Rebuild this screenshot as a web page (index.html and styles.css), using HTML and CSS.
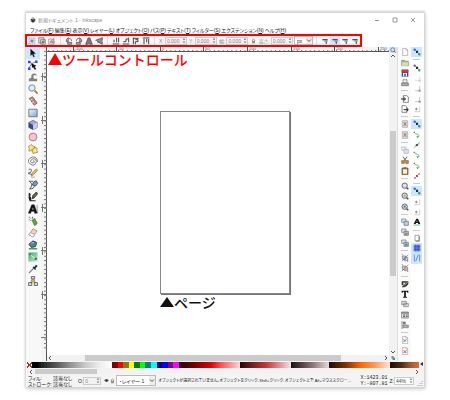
FILE: index.html
```html
<!DOCTYPE html>
<html lang="ja">
<head>
<meta charset="utf-8">
<title>新規ドキュメント 1 - Inkscape</title>
<link rel="stylesheet" href="styles.css">
</head>
<body>
<svg class="defs" aria-hidden="true">
  <defs>
    <linearGradient id="g-blue" x2="1" y2="1"><stop stop-color="#eef6fd"/><stop offset="1" stop-color="#7fa6cc"/></linearGradient>
    <linearGradient id="g-grass" x2="1" y2="1"><stop stop-color="#3fa765"/><stop offset="1" stop-color="#c6efcf"/></linearGradient>
    <symbol id="snap" viewBox="0 0 12 12"><path d="M2.5 2.5 9.5 9.5" stroke="#5c7a94"/><path d="M1 1h3v3H1z" fill="#2a55d8"/><path d="M4.5 4h3.200v3.500H4.500z" fill="#1d2b52"/><path d="M8 8h3v3H8z" fill="#2c8a50"/></symbol>
    <symbol id="corner" viewBox="0 0 12 12"><path d="M3 10h7V3" fill="none" stroke="#a9b0b5"/><path d="M8.500 8.500h3v3h-3z" fill="#8c9599"/></symbol>
    <symbol id="cornerdot" viewBox="0 0 12 12"><path d="M2 10h8V2" fill="none" stroke="#b7bbbe"/><path d="M5 4v4M3 6h4" stroke="#666"/></symbol>
    <symbol id="curve" viewBox="0 0 12 12"><path d="M2 2c1 4 7 1 7 6" fill="none" stroke="#55a868" stroke-width="1.300"/><path d="M5 8h4l-2 3z" fill="#4c8e5c"/><path d="M1 1h2v2H1z" fill="#777"/></symbol>
    <symbol id="mag" viewBox="0 0 12 12"><circle cx="5.500" cy="5.500" r="4" fill="#d3e2ee" stroke="#59636b" stroke-width="1.400"/><path d="m8.500 8.500 2.500 2.500" stroke="#444" stroke-width="2"/></symbol>
    <symbol id="clone" viewBox="0 0 12 12"><path d="M1 1.500h6.500v5H1z" fill="#dbe5ee" stroke="#69747e"/><path d="M4.500 5h6.500v6H4.500z" fill="#b9d0e5" stroke="#556370"/></symbol>
    <symbol id="doc" viewBox="0 0 12 12"><path d="M2.500.5h5l2.500 2.500v8.500h-7.500z" fill="#fafafa" stroke="#a0a0a0"/><path d="M7.500.5v2.500h2.500" fill="none" stroke="#a0a0a0"/></symbol>
    <symbol id="undo" viewBox="0 0 12 12"><path d="M2 1h8v10H2z" fill="#ddd" stroke="#a5a5a5"/><path d="M3 4h6M3 8h6" stroke="#999"/><circle cx="6" cy="6" r="1.700" fill="#b08080"/></symbol>
    <symbol id="group" viewBox="0 0 12 12"><path d="M2 3h5v5H2zM5 5h5v5H5z" fill="#ccd7e0" stroke="#667683"/><path d="M1 11 11 1M1 1h2M9 11h2" stroke="#607080"/></symbol>
    <symbol id="rot" viewBox="0 0 12 12"><path d="M2 7V4l3-3v6zM4 8h6v3H4z" fill="#aaa" stroke="#444"/><path d="M6 2q4 0 4 4" fill="none" stroke="#444"/></symbol>
    <symbol id="stack" viewBox="0 0 12 12"><path d="M1 10.500h10M3 8V4M7 8V1M10 1v7" fill="none" stroke="#444" stroke-width="1.500"/></symbol>
    <symbol id="affect" viewBox="0 0 12 12"><path d="M2 3h8v2H2z" fill="#555"/><path d="M5 5h5v2H5z" fill="#888"/><path d="M7 7h2v3H7z" fill="#555"/></symbol>
    <symbol id="spin" viewBox="0 0 4 8"><path d="M.5 3 2 1l1.500 2zM.5 5 2 7l1.500-2z" fill="#777"/></symbol>
    <symbol id="lock" viewBox="0 0 6 8"><path d="M1.500 4V2.500q1.500-2 3 0V4" fill="none" stroke="#876"/><path d="M1 4h4v3H1z" fill="#a98b60"/></symbol>
    <pattern id="h-ticks" width="4.360" height="5" x="-3.100" patternUnits="userSpaceOnUse"><path d="M.5 3v2" stroke="#777"/></pattern>
    <pattern id="v-ticks" width="6" height="4.360" y="-.5" patternUnits="userSpaceOnUse"><path d="M3 .5h3" stroke="#777"/></pattern>
  </defs>
</svg>

<main class="window">
  <header class="titlebar">
    <svg class="logo" viewBox="0 0 12 12"><path d="M6 .5 11.500 6q-.5 1.500-3 1.500L10 9 6 11.500 2 9l1.500-1.500Q1 7.500.5 6z" fill="#333"/><path d="m6 1.500 2.500 2.500L6 5 3.500 4z" fill="#ddd"/></svg>
    <h1 class="title">新規ドキュメント 1 - Inkscape</h1>
    <button class="caption" aria-label="最小化"><svg viewBox="0 0 6 6"><path d="M1 3.500h4"/></svg></button>
    <button class="caption" aria-label="最大化"><svg viewBox="0 0 6 6"><path d="M1 1h4v4H1z"/></svg></button>
    <button class="caption" aria-label="閉じる"><svg viewBox="0 0 6 6"><path d="m1 1 4 4M5 1 1 5"/></svg></button>
  </header>

  <nav class="menubar">
    <button>ファイル(<u>F</u>)</button><button>編集(<u>E</u>)</button><button>表示(<u>V</u>)</button><button>レイヤー(<u>L</u>)</button><button>オブジェクト(<u>O</u>)</button><button>パス(<u>P</u>)</button><button>テキスト(<u>T</u>)</button><button>フィルター(<u>S</u>)</button><button>エクステンション(<u>N</u>)</button><button>ヘルプ(<u>H</u>)</button>
  </nav>

  <section class="toolbar" aria-label="ツールコントロール">
    <div class="set">
      <button aria-label="すべて選択"><svg viewBox="0 0 12 12"><path d="M1.500 1.500h9v9h-9z" fill="#dce6f0" stroke="#8c9bad" stroke-dasharray="2 1"/><path d="M4 4h4v4H4z" fill="#7089aa"/></svg></button>
      <button aria-label="全レイヤーで選択"><svg viewBox="0 0 12 12"><path d="M1 1h8v8H1zM4 4h7v7H4z" fill="#ddd" stroke="#666"/><path d="M6 6h3v3H6z" fill="#777"/></svg></button>
      <button aria-label="選択解除"><svg viewBox="0 0 12 12"><path d="M1 3h8v8H1z" fill="#eee" stroke="#888"/><path d="M3 8 10 1M4 6h5v3H4z" stroke="#a77" fill="#bbb"/></svg></button>
    </div>
    <div class="set ruled">
      <button aria-label="左に回転"><svg><use href="#rot"/></svg></button>
      <button aria-label="右に回転"><svg class="flip"><use href="#rot"/></svg></button>
      <button aria-label="水平反転"><svg viewBox="0 0 12 12"><path d="M5 1v10H1zM7 1v10h4z" fill="#888" stroke="#333"/></svg></button>
      <button aria-label="垂直反転"><svg viewBox="0 0 12 12"><path d="M11 5V1L1 5zM11 7v4L3 7z" fill="#999" stroke="#444"/></svg></button>
    </div>
    <div class="set ruled">
      <button aria-label="最背面"><svg><use href="#stack"/></svg></button>
      <button aria-label="背面"><svg viewBox="0 0 12 12"><path d="M1 10.500h10M10 1v7M2 7h4V3h3" fill="none" stroke="#444" stroke-width="1.500"/></svg></button>
      <button aria-label="前面"><svg viewBox="0 0 12 12"><path d="M2 1v10M2 2h8M5 4h4v3H5v4" fill="none" stroke="#444" stroke-width="1.500"/></svg></button>
      <button aria-label="最前面"><svg viewBox="0 0 12 12"><path d="M1 1.500h10M3 3v8M7 3v5M10 3v8" fill="none" stroke="#444" stroke-width="1.500"/></svg></button>
    </div>
    <div class="fields ruled">
      <label for="fx">X:</label><span class="num"><input id="fx" value="0.000"><svg><use href="#spin"/></svg></span>
      <label for="fy">Y:</label><span class="num"><input id="fy" value="0.000"><svg><use href="#spin"/></svg></span>
      <label for="fw">幅:</label><span class="num"><input id="fw" value="0.000"><svg><use href="#spin"/></svg></span>
      <button class="lock" aria-label="比率を固定"><svg><use href="#lock"/></svg></button>
      <label for="fh">高さ:</label><span class="num"><input id="fh" value="0.000"><svg><use href="#spin"/></svg></span>
      <span class="pick unit"><select aria-label="単位"><option>px</option></select><svg viewBox="0 0 6 6"><path d="m1 2 2 2 2-2"/></svg></span>
    </div>
    <div class="set ruled">
      <button aria-label="線幅"><svg><use href="#affect"/></svg></button>
      <button class="on" aria-label="角丸"><svg><use href="#affect"/></svg></button>
      <button aria-label="グラデーション"><svg><use href="#affect"/></svg></button>
      <button aria-label="パターン"><svg><use href="#affect"/></svg></button>
    </div>
  </section>

  <section class="work">
    <div class="toolbox">
      <button class="on" aria-label="選択"><svg viewBox="0 0 12 12"><path d="M3 1v8.500l2-2 1.500 3.500 1.500-.7-1.500-3.300H9.500z" fill="#111"/></svg></button>
      <button aria-label="ノード"><svg viewBox="0 0 12 12"><path d="M1.500 11Q2 4 10 2M1.500 2l3 2" fill="none" stroke="#4a5de0"/><path d="M0 1h3v3H0zM8.500.5h3v3h-3zM0 9h3v3H0z" fill="#3648e8"/><path d="m4 4 6 3-2 1 2 3-2 .5-2-3-1 1z" fill="#111"/></svg></button>
      <button aria-label="微調整"><svg viewBox="0 0 12 12"><path d="M1 11V8q4 0 3-4 1-3 5-2 2 1 1 3-1-2-3-1-1 1 0 4h4v3z" fill="#7d8284"/></svg></button>
      <button aria-label="ズーム"><svg viewBox="0 0 12 12"><circle cx="4.800" cy="4.800" r="3.800" fill="#d9edfb" stroke="#6f8faa" stroke-width="1.200"/><path d="m8 8 3.500 3.500" stroke="#c07a20" stroke-width="2.200"/></svg></button>
      <button aria-label="計測"><svg viewBox="0 0 12 12"><path d="m1.500 3 4-2 5.500 7.500-3.500 2.500z" fill="#bb8e80" stroke="#775b53"/><path d="m3 5 2-1M5 8l2-1" stroke="#eee"/></svg></button>
      <button aria-label="矩形"><svg viewBox="0 0 12 12"><path d="M1 1.500h10v9H1z" fill="url(#g-blue)" stroke="#54708b"/></svg></button>
      <button aria-label="3D ボックス"><svg viewBox="0 0 12 12"><path d="m6 .5 5 2.500v6l-5 2.500L1 9V3z" fill="#a3abdb" stroke="#5d659e"/><path d="m6 6 5-3v6l-5 2.500z" fill="#c8cdf0"/><path d="M1 3 6 6v5.500L1 9z" fill="#3c4583"/></svg></button>
      <button aria-label="円"><svg viewBox="0 0 12 12"><circle cx="6" cy="6" r="4.700" fill="#f9c5cc" stroke="#a76a72"/></svg></button>
      <button aria-label="星形"><svg viewBox="0 0 12 12"><path d="m4 .5 1.500 2 3 .5-1.500 3 .5 3-3.500-1-3 .5.500-3L.5 3z" fill="#f8e57f" stroke="#8a7838" stroke-width=".8"/><path d="m7.500 4 3.500 1-.5 2.500 1 2.500-3 .5-2.500 1-.5-3-1-2 2.500-.5z" fill="#fbe97c" stroke="#8a7838" stroke-width=".8"/></svg></button>
      <button aria-label="らせん"><svg viewBox="0 0 12 12"><path d="M6 6q1.500-1 1.500 1T4.500 8 4 4.500 9 4t0 5.500-6.500 0T2 3t6.500-1.500T11.500 7" fill="none" stroke="#777" stroke-width="1.100"/></svg></button>
      <button aria-label="鉛筆"><svg viewBox="0 0 12 12"><path d="M1 2q3-2 3 1T1 6t4 2" fill="none" stroke="#444"/><path d="m4 10 1-4 5-5 1.500 2-5 5z" fill="#f0c046" stroke="#7d6530" stroke-width=".7"/><path d="M4 11h4" stroke="#c85"/></svg></button>
      <button aria-label="ペン"><svg viewBox="0 0 12 12"><path d="M1 1.500h5M2 2q5 3 0 9 5 0 6-4" fill="none" stroke="#444"/><path d="m5 6 2-4 3-1 1.500 3-2 3z" fill="#7e9cba" stroke="#34495d"/></svg></button>
      <button aria-label="カリグラフィ"><svg viewBox="0 0 12 12"><path d="M1 1q4 1 1 5 2-2 2 4h5v1H2Q0 8 1 1z" fill="#222"/><path d="m5 8 1-4 4-4 1.500 2-4 5z" fill="#776a4f" stroke="#222"/></svg></button>
      <button aria-label="テキスト"><svg viewBox="0 0 12 12"><path d="M.5 11 4.500 1h3l3.500 10H8L7.400 8.800H4L3.300 11zM4.700 6.800h2.200L5.900 3.500zM11 1v10" fill="#111" stroke="#111" stroke-width=".5" fill-rule="evenodd"/></svg></button>
      <button aria-label="スプレー"><svg viewBox="0 0 12 12"><path d="m5 5 3-2 3 6-3 2.500z" fill="#5fae31" stroke="#3b7120"/><path d="M1 1h1v1H1zM3 2h1v1H3zM1 4h1v1H1zM5 1h1v2H5zM3 5h1v1H3z" fill="#444"/></svg></button>
      <button aria-label="消しゴム"><svg viewBox="0 0 12 12"><path d="m1 8 5-7 5 2.500-5 7z" fill="#f6cfc0" stroke="#a47a6b" stroke-width=".8"/><path d="m1 8 2-2.500L8 8l-2 3z" fill="#fff" stroke="#a99"/></svg></button>
      <button aria-label="塗りつぶし"><svg viewBox="0 0 12 12"><path d="m1 5 5-4 4.500 2L9 8 4 9z" fill="#50809a" stroke="#293f50"/><path d="M1 10.500h10" stroke="#3aa35c" stroke-width="1.800"/><path d="m4 4 3-1" stroke="#c7e1ef"/></svg></button>
      <button aria-label="グラデーション"><svg viewBox="0 0 12 12"><path d="M.5.500h11v11H.500z" fill="url(#g-grass)"/><path d="m2 3 7 5" stroke="#e8fff0"/><path d="M1.500 2h2v2h-2zM8 7h2.500v2.500H8z" fill="#426b52"/></svg></button>
      <button aria-label="スポイト"><svg viewBox="0 0 12 12"><path d="m1 11 6-6" stroke="#779" stroke-width="1.500"/><path d="m5.500 4 1-1 1.200.7L9.500 1l2 1.500L9 5l.5 1.500-1 .7z" fill="#20273b"/></svg></button>
      <button aria-label="コネクター"><svg viewBox="0 0 12 12"><path d="M6 2 2.500 9.500M6 2l3.500 7.500M6 6l-3 3M6 6l3 3" stroke="#666"/><path d="M4 .5h4v3H4zM.5 8h4v3.500h-4zM7.500 8h4v3.500h-4z" fill="#ddd" stroke="#555"/><circle cx="6" cy="6.500" r="1.700" fill="#e5a032"/></svg></button>
    </div>

    <div class="ruler-v"><svg preserveAspectRatio="none"><path d="M5.500 0v400" stroke="#555"/><rect width="6" height="303" fill="url(#v-ticks)"/><path d="M0 29.500h6M0 73.500h6M0 116.500h6M0 160.500h6M0 203.500h6M0 247.500h6M0 290.500h6M1.500 26v8M1.500 69v8M1.500 113v8M1.500 157v8M1.500 200v8M1.500 244v8" stroke="#777"/></svg></div>

    <div class="stage">
      <div class="ruler-h"><svg><rect width="342" height="5" fill="url(#h-ticks)"/><path d="M0 4.500h400M26.500 0v5M69.500 0v5M113.500 0v5M156.500 0v5M200.500 0v5M244.500 0v5M287.500 0v5M331.500 0v5" stroke="#555"/><g class="marks"><text x="28" y="3">-100</text><text x="71" y="3">-50</text><text x="115" y="3">0</text><text x="158" y="3">50</text><text x="202" y="3">100</text><text x="246" y="3">150</text><text x="289" y="3">200</text><text x="333" y="3">250</text></g></svg></div>
      <div class="canvas">
        <div class="page"></div>
        <p class="note note-tools"><svg viewBox="0 0 14 12"><path d="M7 0l7 12H0z"/></svg>ツールコントロール</p>
        <p class="note note-page"><svg viewBox="0 0 14 12"><path d="M7 1l7 10H0z"/></svg>ページ</p>
      </div>
      <div class="scroll-h"><svg viewBox="0 0 6 6"><path d="M4 1 2 3l2 2"/></svg><i class="lead"></i><i class="thumb"></i><i class="tail"></i><svg viewBox="0 0 6 6"><path d="m2 1 2 2-2 2"/></svg></div>
    </div>

    <div class="scroll-v">
      <button class="on" aria-label="ウィンドウに合わせる"><svg><use href="#mag"/></svg></button>
      <svg class="arrow" viewBox="0 0 6 6"><path d="m1 4 2-2 2 2"/></svg><i class="lead"></i><i class="thumb"></i><i class="tail"></i><svg class="arrow" viewBox="0 0 6 6"><path d="m1 2 2 2 2-2"/></svg>
      <button aria-label="カラーマネジメント"><svg viewBox="0 0 12 12"><path d="M3 2h4v5H3z" fill="#888"/><path d="M5 5h5v5H5z" fill="#47a36a"/></svg></button>
    </div>

    <div class="commands">
      <button aria-label="新規"><svg><use href="#doc"/></svg></button>
      <button aria-label="開く"><svg viewBox="0 0 12 12"><path d="M1 2h4l1 1.500h5V10H1z" fill="#a9b583" stroke="#7f8a61"/><path d="M2 5h9l-1 5H1z" fill="#d7deb4"/></svg></button>
      <button aria-label="保存"><svg viewBox="0 0 12 12"><path d="M1 1h10v10.500H1z" fill="#3450a4"/><path d="M1 1h10v4H1z" fill="#d5362f"/><path d="M3 6h6v5H3z" fill="#e8eef6"/><path d="M5 7h2v4H5z" fill="#345"/></svg></button>
      <button aria-label="印刷"><svg viewBox="0 0 12 12"><path d="M3 1h6v5H3z" fill="#eee" stroke="#777"/><path d="M1 6h10v4H1z" fill="#aaa" stroke="#666"/></svg></button>
      <hr>
      <button aria-label="インポート"><svg viewBox="0 0 12 12"><path d="M3.500 1h5L11 3v8H3.500z" fill="#fff" stroke="#555"/><path d="M0 6h6M4 3.500 7 6 4 8.500" fill="none" stroke="#222" stroke-width="1.500"/></svg></button>
      <button aria-label="エクスポート"><svg viewBox="0 0 12 12"><path d="M1.500 1h5L9 3v8H1.500z" fill="#fff" stroke="#555"/><path d="M4 7h6M8 4.500 11 7 8 9.500" fill="none" stroke="#222" stroke-width="1.500"/></svg></button>
      <hr>
      <button aria-label="元に戻す"><svg><use href="#undo"/></svg></button>
      <button aria-label="やり直し"><svg><use href="#undo"/></svg></button>
      <hr>
      <button aria-label="コピー"><svg class="dim"><use href="#clone"/></svg></button>
      <button aria-label="切り取り"><svg viewBox="0 0 12 12"><path d="m3 1 4 6M9 1 5 7" stroke="#666" stroke-width="1.500"/><path d="M1 7h4v4H1zM7 7h4v4H7z" fill="#d38b26" stroke="#8d5a14"/></svg></button>
      <button aria-label="貼り付け"><svg viewBox="0 0 12 12"><path d="M1.500 1.500h9v10h-9z" fill="#b98035" stroke="#6d4a1c"/><path d="M3 3.500h6v6.500H3z" fill="#f8f4ea"/><path d="M4 .5h4v2H4z" fill="#666"/></svg></button>
      <hr>
      <button aria-label="選択オブジェクトをズーム"><svg><use href="#mag"/></svg></button>
      <button aria-label="描画全体をズーム"><svg viewBox="0 0 12 12"><use href="#mag"/><path d="M4 4h3v3H4z" fill="#d0a83b"/></svg></button>
      <button aria-label="ページをズーム"><svg viewBox="0 0 12 12"><use href="#mag"/><path d="M4 4h3v3H4z" fill="#4f7396"/></svg></button>
      <hr>
      <button aria-label="複製"><svg><use href="#clone"/></svg></button>
      <button aria-label="クローン"><svg viewBox="0 0 12 12"><use href="#clone"/><path d="M6 7h4v3H6z" fill="#b67c31"/></svg></button>
      <button aria-label="クローン解除"><svg viewBox="0 0 12 12"><use href="#clone"/><path d="M6 7h4v3H6z" fill="#4f966a"/></svg></button>
      <hr>
      <button aria-label="グループ化"><svg><use href="#group"/></svg></button>
      <button aria-label="グループ解除"><svg viewBox="0 0 12 12"><use href="#group"/><path d="M5 5h4v4H5z" fill="#e1aa64"/></svg></button>
      <hr>
      <button aria-label="フィル／ストローク"><svg viewBox="0 0 12 12"><path d="M1 2h10v4q-2 4-6 5H1l3-3H1z" fill="#333"/><path d="M3 4h4l-3 4z" fill="#eee"/><path d="m5 8 5-5" stroke="#d1ad72" stroke-width="1.500"/></svg></button>
      <button aria-label="テキストとフォント"><svg viewBox="0 0 12 12"><path d="M1 1h10v3H9.500L9 2.800H7.300V10L9 10.500v1H3v-1l1.700-.5V2.800H3L2.500 4H1z" fill="#111"/></svg></button>
      <button aria-label="レイヤー"><svg viewBox="0 0 12 12"><path d="M1 2h7v5H1zM4 5h7v5H4z" fill="#ddd" stroke="#777"/></svg></button>
      <button aria-label="XML エディター"><svg viewBox="0 0 12 12"><path d="M1 1.500h10v9H1z" fill="#eee" stroke="#666"/><path d="M1 3h10M3 6h3M7 6h3M3 8.500h3M7 8.500h3" stroke="#555" stroke-width="1.500"/></svg></button>
      <button aria-label="整列と配置"><svg viewBox="0 0 12 12"><path d="M1.500 0v12" stroke="#555"/><path d="M3 1h4v4H3z" fill="#777"/><path d="M3 6h8v4H3z" fill="#c3a2a2" stroke="#6f7d91"/></svg></button>
      <hr>
      <button aria-label="環境設定"><svg viewBox="0 0 12 12"><use href="#doc"/><path d="m4 9 4-4M4 5l3 3" stroke="#678" stroke-width="1.500"/></svg></button>
      <button aria-label="ドキュメントの設定"><svg viewBox="0 0 12 12"><use href="#doc"/><path d="m4 5 4 4M8 5 4 9" stroke="#e33f3f" stroke-width="1.500"/></svg></button>
    </div>

    <div class="commands snaps">
      <button class="on" aria-label="スナップ"><svg><use href="#snap"/></svg></button>
      <hr>
      <button aria-label="境界枠"><svg><use href="#snap"/></svg></button>
      <button aria-label="境界枠の辺"><svg class="dim"><use href="#corner"/></svg></button>
      <button aria-label="境界枠の角"><svg><use href="#corner"/></svg></button>
      <button aria-label="辺の中点"><svg><use href="#corner"/></svg></button>
      <button aria-label="境界枠の中心"><svg><use href="#cornerdot"/></svg></button>
      <hr>
      <button class="on" aria-label="ノードにスナップ"><svg><use href="#snap"/></svg></button>
      <button aria-label="パス"><svg><use href="#curve"/></svg></button>
      <button aria-label="交点"><svg viewBox="0 0 12 12"><path d="M1 10Q6 9 10 1M2 7l8-3" fill="none" stroke="#6fab7a"/><path d="M4.500 4.500h3v3h-3z" fill="#555"/></svg></button>
      <button aria-label="シャープノード"><svg><use href="#curve"/></svg></button>
      <button aria-label="スムーズノード"><svg><use href="#curve"/></svg></button>
      <button aria-label="線の中点"><svg viewBox="0 0 12 12"><path d="m2 10 8-8" stroke="#88a" /><path d="M4.500 4.500h3v3h-3zM2 8h2v2H2z" fill="#d33b39"/><path d="M8 2h2v2H8z" fill="#4c9958"/></svg></button>
      <hr>
      <button class="on" aria-label="その他"><svg><use href="#snap"/></svg></button>
      <button aria-label="オブジェクトの中心"><svg><use href="#cornerdot"/></svg></button>
      <button aria-label="回転中心"><svg><use href="#cornerdot"/></svg></button>
      <button aria-label="テキストのベースライン"><svg viewBox="0 0 12 12"><path d="M1 9 5 1h2.500L11 9H8L7.500 7.500H4.500L4 9zM5.200 5.700h1.600L6 3.500z" fill="#111" fill-rule="evenodd"/><path d="M1 10.500h10" stroke="#3a9e63"/></svg></button>
      <hr>
      <button aria-label="ページ枠"><svg viewBox="0 0 12 12"><path d="M3 2h6v8H3z" fill="#fff" stroke="#777"/><path d="M9.500 3v8H4" fill="none" stroke="#666"/></svg></button>
      <button class="on" aria-label="グリッド"><svg viewBox="0 0 12 12"><path d="M1 1h10v10H1z" fill="#6780f2"/><path d="M1 4h10M1 8h10M4 1v10M8 1v10" stroke="#304cd6"/></svg></button>
      <button class="on" aria-label="ガイド"><svg viewBox="0 0 12 12"><path d="M2 1v10M4 11 8 1M10 1v10" stroke="#526bea" stroke-width="1.200"/></svg></button>
      <span class="filler"></span>
    </div>
  </section>

  <section class="palette" aria-label="パレット">
    <i class="none"></i><i class="grays"></i>
    <div class="basic"><i class="c-maroon"></i><i class="c-red"></i><i class="c-olive"></i><i class="c-yellow"></i><i class="c-green"></i><i class="c-lime"></i><i class="c-teal"></i><i class="c-cyan"></i><i class="c-navy"></i><i class="c-blue"></i><i class="c-purple"></i><i class="c-magenta"></i></div>
    <i class="reds"></i><i class="roses"></i><i class="taupes"></i><i class="oranges"></i><i class="browns"></i>
    <svg viewBox="0 0 4 6"><path d="M3.500 0v4L.5 2z"/></svg>
  </section>
  <div class="palette-scroll"><svg viewBox="0 0 6 6"><path d="M4 1 2 3l2 2"/></svg><i class="thumb"></i><i class="tail"></i><svg viewBox="0 0 6 6"><path d="m2 1 2 2-2 2"/></svg></div>

  <footer class="status">
    <dl class="style"><dt>フィル:</dt><dd>該当なし</dd><dt>ストローク:</dt><dd>該当なし</dd></dl>
    <label for="op">O:</label><span class="num opacity"><input id="op" value="0"><svg><use href="#spin"/></svg></span>
    <button class="eye" aria-label="表示"><svg viewBox="0 0 12 12"><path d="M0 6q6-7 12 0-6 7-12 0z" fill="#777"/><circle cx="6" cy="6" r="2.500" fill="#222"/></svg></button>
    <button class="lock" aria-label="レイヤーをロック"><svg><use href="#lock"/></svg></button>
    <span class="pick layer"><select aria-label="レイヤー"><option>・レイヤー 1</option></select><svg viewBox="0 0 6 6"><path d="m1 2 2 2 2-2"/></svg></span>
    <p class="message">オブジェクトが選択されていません。オブジェクトをクリック、Shift+クリック、オブジェクト上で Alt+マウススクロー…</p>
    <p class="coords">X:1423.01<br>Y:-807.81</p>
    <label for="zoom">Z:</label><span class="num zoom"><input id="zoom" value="44%"><svg><use href="#spin"/></svg></span>
    <svg class="grip" viewBox="0 0 6 6"><path d="M5 1v1M5 3v1M3 3v1M1 5v1M3 5v1M5 5v1"/></svg>
  </footer>
</main>
</body>
</html>
```
FILE: styles.css
```css
* { box-sizing: border-box; }

body {
  margin: 0;
  height: 100vh;
  padding: 12px 26px 13px;
  background: #fff;
  color: #222;
  font: 5px/6px "Liberation Sans", "Noto Sans CJK JP", sans-serif;
  font-feature-settings: "palt";
}

.defs { position: absolute; width: 0; height: 0; }
p, h1, dl, dd { margin: 0; }
svg { display: block; flex: none; }

button {
  display: flex;
  align-items: center;
  justify-content: center;
  padding: 0;
  border: 0;
  background: none;
  color: inherit;
  font: inherit;
  font-feature-settings: inherit;
}

.on { background: #cce8ff; }
.dim { opacity: 0.5; }
.flip { transform: scaleX(-1); }

.window {
  display: flex;
  flex-direction: column;
  height: 100%;
  background: #fff;
  box-shadow: 0 0 2px 1px #d2d2d2, 1px 2px 4px #ccc;
}

/* Title and menus */
.titlebar {
  display: flex;
  align-items: center;
  height: 13px;
  padding: 2px 2px 0 4px;
  border-top: 1px solid #d8d8d8;
}
.logo { width: 6px; height: 6px; margin-right: 2px; }
.title {
  flex: 1;
  color: #888;
  font-size: 5px;
  font-weight: 400;
  line-height: 8px;
}
.caption { width: 18px; }
.caption svg { width: 6px; height: 6px; fill: none; stroke: #999; stroke-width: 1; }

.menubar {
  display: flex;
  gap: 1px;
  height: 10px;
  padding-left: 4px;
  white-space: nowrap;
}

/* Tool controls */
.toolbar {
  display: flex;
  align-items: center;
  align-self: flex-start;
  width: 337px;
  height: 13px;
  margin: -1px 0 0 -1px;
  border: 2px solid #f00;
  background: #f7f7f7;
  white-space: nowrap;
  z-index: 1;
}
.set { display: flex; }
.set button { width: 10px; height: 9px; }
.set svg { width: 8px; height: 8px; }
.ruled { margin-left: 3px; padding-left: 3px; border-left: 1px solid #ddd; }
.fields { display: flex; flex: 1; align-items: center; justify-content: space-between; }
.fields label { padding-left: 1px; color: #888; }

.num {
  display: flex;
  align-items: center;
  width: 22px;
  height: 8px;
  border: 1px solid #ccc;
  background: #f2f2f2;
}
.num input {
  flex: 1;
  width: 0;
  min-width: 0;
  padding: 0 0 0 1px;
  border: 0;
  background: none;
  color: #888;
  font: inherit;
}
.num svg { width: 4px; height: 7px; }
.lock { width: 7px; }
.lock svg { width: 5px; height: 6px; }

.pick { position: relative; display: block; height: 9px; }
.pick select {
  display: block;
  width: 100%;
  height: 100%;
  padding: 0 0 0 2px;
  border: 1px solid #bbb;
  border-radius: 0;
  appearance: none;
  background: #fff;
  color: #333;
  font: inherit;
}
.pick svg {
  position: absolute;
  top: 1px;
  right: 1px;
  width: 6px;
  height: 7px;
  background: #eee;
}
.pick path, .scroll-h path, .arrow path, .palette-scroll path { fill: none; stroke: #555; }
.unit { width: 19px; }

/* Work area */
.work {
  display: grid;
  grid-template-columns: 15px 6px 1fr 8px 14px 13px;
  flex: 1;
  min-height: 0;
}
.toolbox button { width: 14px; height: 12px; }
.toolbox svg { width: 10px; height: 10px; }
.toolbox { background: #f8f8f8; }

.ruler-v, .ruler-h { overflow: hidden; background: #f4f4f4; }
.ruler-v svg, .ruler-h svg { width: 100%; height: 100%; }
.ruler-v { min-height: 0; }
.marks { fill: #555; font-size: 4px; }

.stage {
  display: grid;
  grid-template-rows: 5px 1fr 6px;
  min-width: 0;
  min-height: 0;
}
.canvas { position: relative; background: #fff; }
.page {
  position: absolute;
  top: 59px;
  left: 113px;
  width: 130px;
  height: 183px;
  border: 1px solid #888;
  box-shadow: 1px 1px #777;
}
.note {
  position: absolute;
  display: flex;
  align-items: center;
  font-family: "Noto Sans CJK JP", sans-serif;
  font-feature-settings: normal;
  font-size: 14px;
  font-weight: 500;
  line-height: 14px;
  white-space: nowrap;
}
.note svg { width: 14px; height: 12px; fill: currentColor; }
.note-tools { top: 0; left: 1px; color: #f00; }
.note-page { top: 243px; left: 113px; color: #111; }

.scroll-h, .palette-scroll { display: flex; background: #f2f2f2; }
.scroll-h svg, .palette-scroll svg, .arrow { width: 6px; height: 6px; }
.thumb { background: #cbcbcb; }
.scroll-h .lead { flex: 32; }
.scroll-h .thumb { flex: 256; }
.scroll-h .tail { flex: 42; }

.scroll-v {
  display: flex;
  flex-direction: column;
  align-items: center;
  background: #f2f2f2;
}
.scroll-v button { width: 100%; height: 6px; }
.scroll-v button svg { width: 6px; height: 6px; }
.scroll-v .lead { flex: 72; }
.scroll-v .thumb { flex: 145; width: 6px; }
.scroll-v .tail { flex: 73; }

.commands {
  display: flex;
  flex-direction: column;
  align-items: center;
  min-height: 0;
  padding-bottom: 5px;
  border-left: 1px solid #ddd;
  background: #fafafa;
}
.commands button { flex: 1; width: 11px; min-height: 0; }
.commands svg { width: 8px; height: 8px; }
.commands hr {
  width: 7px;
  height: 1px;
  margin: 2px 0;
  border: 0;
  background: #ccc;
}
.snaps { align-items: flex-start; border: 0; background: #fff; }
.snaps hr { margin-left: 2px; }
.filler { flex: 7 1 20px; }

/* Palette */
.palette {
  display: flex;
  height: 7px;
  padding: 1px 0 0 1px;
  background: #f4f4f4;
}
.palette svg { width: 5px; height: 6px; fill: #333; }
.none {
  flex: 5;
  background:
    linear-gradient(45deg, transparent 40%, #a33 40% 60%, transparent 60%),
    linear-gradient(-45deg, #fff 40%, #a33 40% 60%, #fff 60%);
}
.grays { flex: 80; background: linear-gradient(90deg, #000 7%, #222 12%, #555 30%, #999 50%, #ccc 68%, #eee 85%, #fff); }
.basic { display: flex; flex: 67; }
.basic i { flex: 1; }
.c-maroon { background: #800000; }
.c-red { background: #f00; }
.c-olive { background: #808000; }
.c-yellow { background: #ff0; }
.c-green { background: #008000; }
.c-lime { background: #0f0; }
.c-teal { background: #008080; }
.c-cyan { background: #0ff; }
.c-navy { background: #000080; }
.c-blue { background: #00f; }
.c-purple { background: #800080; }
.c-magenta { background: #f0f; }
.reds { flex: 61; background: linear-gradient(90deg, #200000, #800000 28%, #e00000 52%, #ff5555 70%, #ffd5d5); }
.roses { flex: 51; background: linear-gradient(90deg, #1c0808, #782121 25%, #c83737 52%, #de8787 75%, #f4e3e3); }
.taupes { flex: 38; background: linear-gradient(90deg, #161212, #554444 30%, #917c7c 60%, #e3dbdb); }
.oranges { flex: 61; background: linear-gradient(90deg, #200a00, #803300 28%, #ff6600 52%, #ff9955 75%, #ffe6d5); }
.browns { flex: 29; background: linear-gradient(90deg, #1c0d05, #502d16 40%, #a05a2c 70%, #e07030); }

.palette-scroll { height: 6px; padding: 1px 0 0 2px; }
.palette-scroll .thumb { width: 62px; margin-left: 1px; }
.palette-scroll .tail { flex: 1; }
.palette-scroll svg:last-child { margin-right: 4px; }

/* Status bar */
.status {
  display: flex;
  align-items: center;
  height: 13px;
  padding-left: 2px;
  background: #f4f4f4;
  white-space: nowrap;
}
.style {
  display: grid;
  grid-template-columns: 25px 25px;
}
.opacity { width: 18px; }
.eye { width: 6px; margin-left: 2px; }
.eye svg { width: 5px; height: 5px; }
.layer { width: 40px; height: 11px; }
.layer svg { height: 9px; }
.message {
  flex: 1;
  min-width: 0;
  margin-left: 2px;
  overflow: hidden;
  font-size: 4px;
}
.coords {
  width: 29px;
  font-family: "Liberation Mono", monospace;
}
.zoom { width: 20px; background: #fff; }
.zoom input { color: #444; }
.grip { width: 6px; height: 6px; margin: 5px 1px 0 3px; stroke: #aaa; }
```
